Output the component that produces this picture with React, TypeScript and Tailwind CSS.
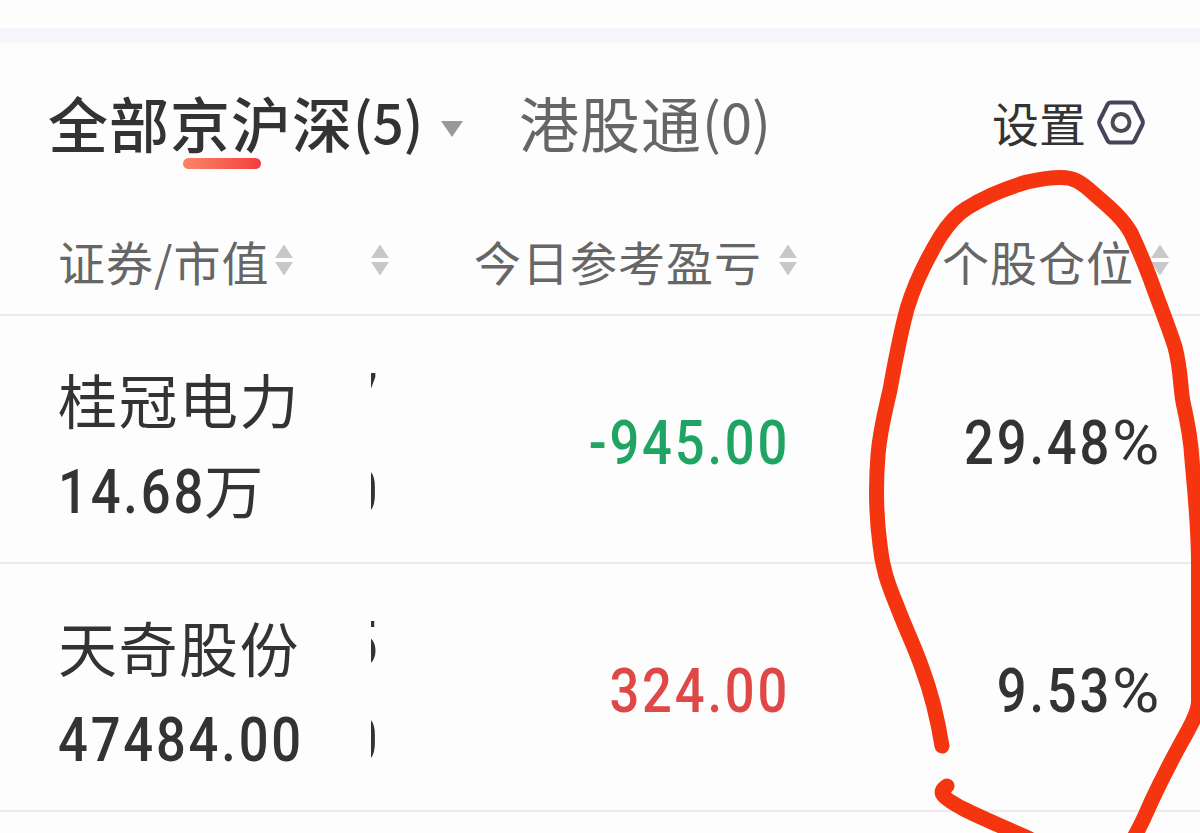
interface Holding {
  name: string
  value: string
  unit?: string
  hidden: [string, string]
  profit: string
  position: string
}

const holdings: Holding[] = [
  { name: '桂冠电力', value: '14.68', unit: '万', hidden: ['7', '0'], profit: '-945.00', position: '29.48' },
  { name: '天奇股份', value: '47484.00', hidden: ['5', '0'], profit: '324.00', position: '9.53' },
]

function SortIcon({ className = '' }: { className?: string }) {
  return (
    <svg className={`shrink-0 ${className}`} width="18" height="32" viewBox="0 0 18 32" fill="#c8c8c8">
      <path d="M9 0.500 L18 14 H0 Z" />
      <path d="M9 31.500 L18 18 H0 Z" />
    </svg>
  )
}

function SettingsIcon() {
  return (
    <svg className="shrink-0" width="50" height="48" viewBox="0 0 50 48" fill="none" stroke="#46445a" strokeWidth="4" strokeLinejoin="round">
      <path d="M15 3.5 H35 Q37.5 3.5 38.5 5.500 L46.500 21.500 Q47.500 23.500 46.500 25.500 L38.500 41.500 Q37.5 43.500 35 43.500 H15 Q12.5 43.500 11.500 41.500 L3.500 25.500 Q2.500 23.500 3.500 21.500 L11.500 5.500 Q12.5 3.5 15 3.5 Z" />
      <circle cx="25" cy="23.500" r="8.500" stroke="#4a4a50" />
    </svg>
  )
}

const digits = "block whitespace-nowrap font-['Roboto','Noto_Sans_CJK_SC',sans-serif] text-[61px] font-medium leading-[60px] tracking-[3.3px]"

function HoldingRow({ item }: { item: Holding }) {
  const color = item.profit.startsWith('-') ? 'text-[#1fa463]' : 'text-[#e04848]'

  return (
    <div className="flex h-[248px] border-b-2 border-[#ebebeb]">
      <div className="w-[371px] shrink-0 pl-[58px] pt-[53px]">
        <div className="whitespace-nowrap text-[59px] leading-[60px] tracking-[1.5px]">{item.name}</div>
        <div className="mt-[33px] flex">
          <span className={`${digits} origin-left scale-x-[0.86]`}>{item.value}</span>
          {item.unit && <span className="-ml-[26px] -mt-[3px] text-[59px] leading-[60px]">{item.unit}</span>}
        </div>
      </div>
      {/* masked price column, only the last few pixels stay visible */}
      <div className="flex w-[7px] shrink-0 flex-col items-end overflow-hidden pt-[50px]">
        <span className={`${digits} origin-right scale-x-[0.86] tracking-normal`}>{item.hidden[0]}</span>
        <span className={`${digits} mt-[36px] origin-right scale-x-[0.86] tracking-normal`}>{item.hidden[1]}</span>
      </div>
      <div className={`flex w-[412px] shrink-0 justify-end pt-[97px] ${color}`}>
        <span className={`${digits} origin-right scale-x-[0.86]`}>{item.profit}</span>
      </div>
      <div className="flex w-[372px] shrink-0 justify-end pt-[97px]">
        <span className={`${digits} origin-right scale-x-[0.86]`}>{item.position}</span>
        <span className="block w-[50px] font-['Roboto',sans-serif] text-[61px] leading-[60px]">
          <span className="inline-block origin-left scale-x-[1.06]">%</span>
        </span>
      </div>
    </div>
  )
}

// Hand-drawn marker around the position column
function Marker() {
  return (
    <svg className="pointer-events-none absolute inset-0" width="1200" height="833" viewBox="0 0 1200 833" fill="none" stroke="#f5350f" strokeWidth="15" strokeLinecap="round" strokeLinejoin="round">
      <path d="M942 746 C937 715 931 692 922 668 C914 645 906 630 897 606 C887 582 882 566 880 545 C876 515 876 480 878 455 C880 430 885 412 890 390 C895 362 900 335 907 309 C914 285 928 257 940 237 C949 223 957 214 967 208 C986 196 1010 187 1027 182 C1040 179 1050 177.500 1061 177.500 C1073 177.500 1080 181 1093 193 C1108 206 1122 217 1131 233 C1139 250 1144 262 1150 278 C1157 298 1168 325 1175 347 C1181 370 1180 385 1183 402 C1188 424 1191 439 1192 460 C1195 495 1198 520 1198.500 560 V702 C1198 715 1188 730 1181 743 C1169 765 1160 783 1152 800 C1147 811 1142 824 1133 839" />
      <path d="M947 786 Q941 790 942.500 794 C948 804 983 818 1030 839" />
    </svg>
  )
}

export default function App() {
  return (
    <div className="relative h-[833px] w-[1200px] overflow-hidden bg-[#fdfdfd] font-['Noto_Sans_CJK_SC',sans-serif] text-[#333333]">
      <div className="mt-[28px] h-[15px] bg-[#f6f5fc]" />

      <div className="flex h-[158px] items-start pl-[48px] pt-[49px]">
        <div className="relative flex w-[471px] items-start">
          <span className="whitespace-nowrap text-[60px] font-medium leading-[60px] tracking-[1px]">全部京沪深</span>
          <span className="block w-[74px] origin-left scale-x-[0.98] whitespace-nowrap text-[56px] font-medium leading-[56px]">(5)</span>
          <svg className="ml-[13px] mt-[28px]" width="24" height="18" viewBox="0 0 24 18">
            <path d="M1 1 H23 L12 17 Z" fill="#999999" />
          </svg>
          <div className="absolute left-[135px] top-[66px] h-[11px] w-[78px] rounded-full bg-gradient-to-r from-[#fb8468] to-[#f23c3c]" />
        </div>
        <div className="flex w-[473px] text-[#666666]">
          <span className="whitespace-nowrap text-[60px] leading-[60px] tracking-[1px]">港股通</span>
          <span className="block origin-left whitespace-nowrap text-[56px] leading-[56px]">(0)</span>
        </div>
        <div className="flex items-center">
          <span className="whitespace-nowrap text-[47px] leading-[60px]">设置</span>
          <span className="ml-[10px] mt-[2px]"><SettingsIcon /></span>
        </div>
      </div>

      <div className="flex h-[115px] items-start border-b-2 border-[#ebebeb] pl-[58px] pt-[30px] text-[47px] leading-[60px] tracking-[1px] text-[#666666]">
        <div className="flex w-[313px] whitespace-nowrap">
          <span>证券/市值</span>
          <SortIcon className="ml-[6px] mt-[13px]" />
        </div>
        <SortIcon className="mt-[13px]" />
        <div className="ml-[85px] flex w-[468px] whitespace-nowrap">
          <span>今日参考盈亏</span>
          <SortIcon className="ml-[17px] mt-[13px]" />
        </div>
        <div className="flex whitespace-nowrap">
          <span>个股仓位</span>
          <SortIcon className="ml-[17px] mt-[13px]" />
        </div>
      </div>

      {holdings.map(item => (
        <HoldingRow key={item.name} item={item} />
      ))}

      <Marker />
    </div>
  )
}
